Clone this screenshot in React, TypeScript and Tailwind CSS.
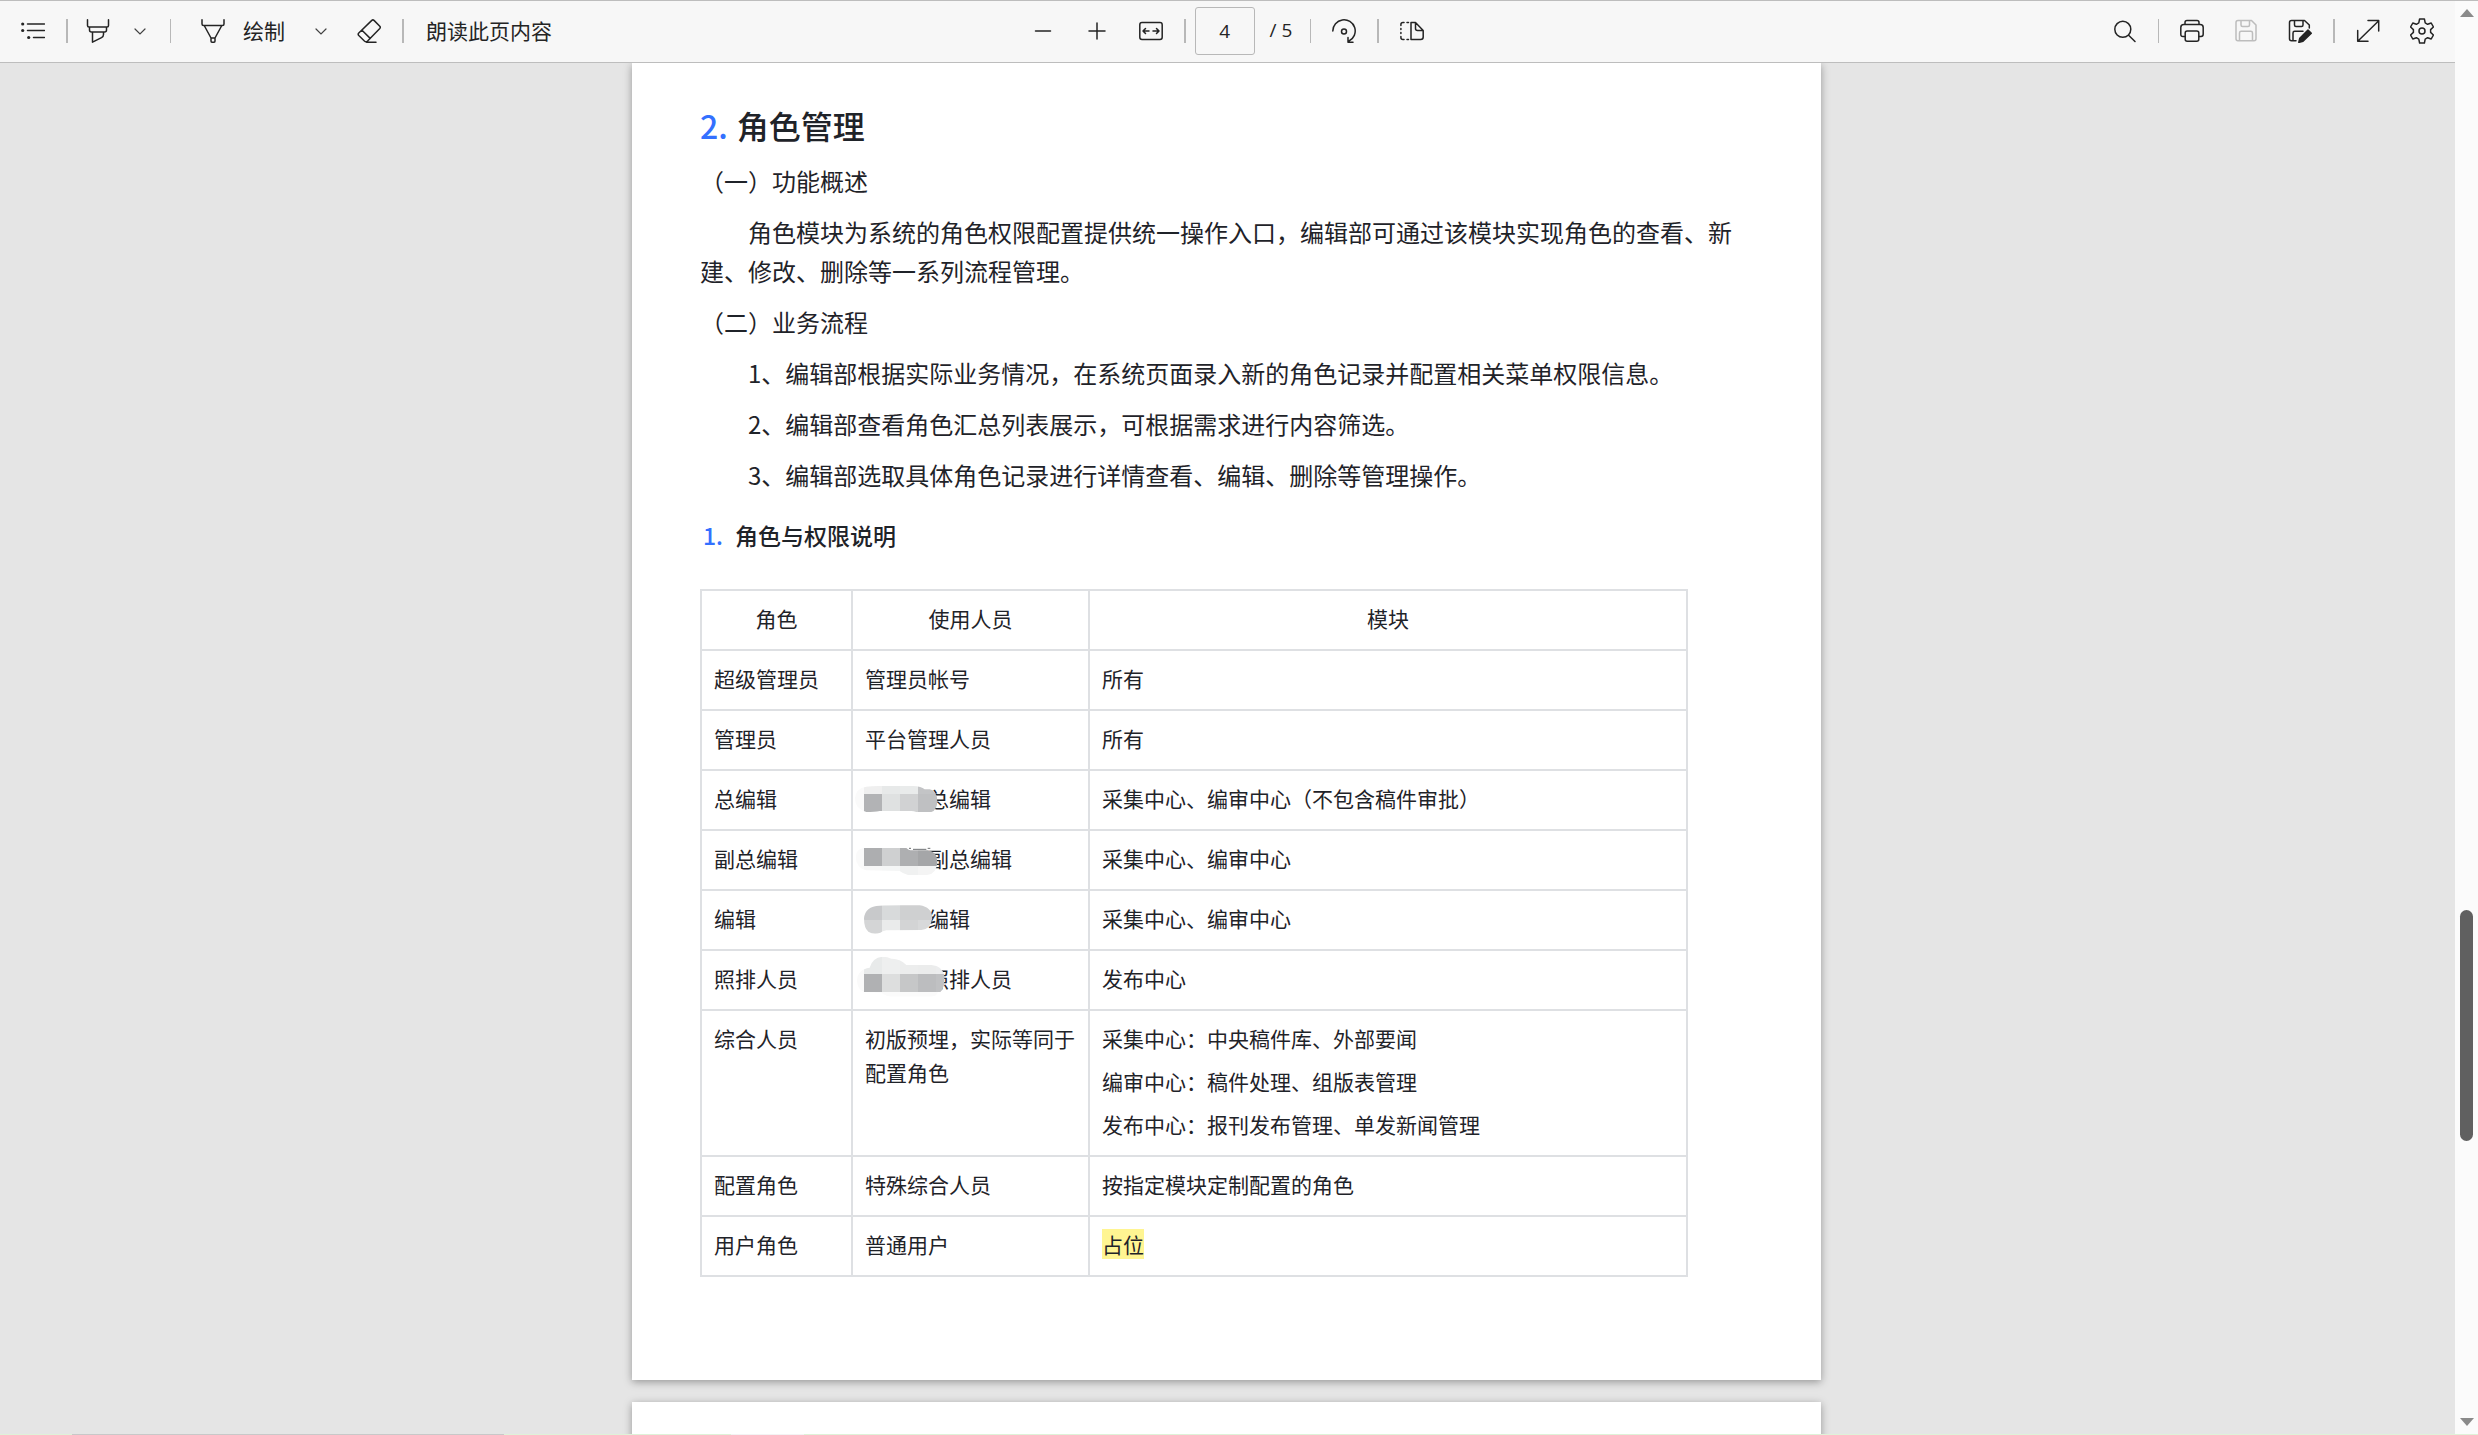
import { useState } from "react";
import type { ReactNode } from "react";

interface Block {
  x: number;
  y: number;
  w: number;
  h: number;
  fill: string;
}

interface MaskShape {
  id: string;
  outline: string;
  blocks: Block[];
  strokes?: string;
}

interface Row {
  role: string;
  user: string;
  modules: string[];
  mask?: MaskShape;
  highlight?: boolean;
}

const row = (y: number, h: number, fills: string[]): Block[] =>
  fills.map((fill, i) => ({ x: i === 0 ? 0 : 33 + (i - 1) * 54, y, w: i === 0 ? 33 : 54, h, fill }));

const masks: Record<string, MaskShape> = {
  chief: {
    id: "mask-chief",
    outline:
      "M40 47Q60 44 90 45L180 45Q205 46 215 55L230 55A24 34 0 0 1 253 90Q252 118 235 123L190 123Q182 120 175 120L80 120Q65 123 40 123Q6 115 6 82Q8 52 40 47Z",
    blocks: [
      ...row(40, 29, ["#fafafa", "#efefef", "#e7e9e9", "#e9ebeb", "#c3c4c6", "#b8b9bc"]),
      ...row(69, 54, ["#fafafa", "#b2b3b5", "#dfe1e1", "#d1d2d3", "#bfc0c2", "#bdbec0"]),
    ],
  },
  deputy: {
    id: "mask-deputy",
    outline:
      "M8 78Q10 52 33 51L160 51Q168 58 172 58L225 58Q252 62 253 92Q252 128 222 132L165 132Q150 128 140 120L40 118Q10 112 8 78Z",
    blocks: [
      ...row(48, 57, ["#fafafa", "#adaeb0", "#cfd0d1", "#aeafb1", "#a5a6a8", "#a9aaac"]),
      ...row(105, 30, ["#fafafa", "#f7f7f7", "#f5f6f6", "#f0f1f1", "#f4f4f4", "#f7f7f7"]),
    ],
    strokes: "M168 52h6M180 55h40M224 52h8",
  },
  editor: {
    id: "mask-editor",
    outline:
      "M33 82Q36 46 80 44Q110 42 200 43Q236 48 238 80Q234 114 205 117L100 118Q88 121 82 125Q62 132 46 122Q33 112 33 82Z",
    blocks: [
      ...row(40, 47, ["#fafafa", "#c8c9cb", "#d8dadb", "#cfd0d1", "#cfd0d1", "#dcdddd"]),
      ...row(87, 45, ["#fafafa", "#d4d5d6", "#eaebeb", "#d3d4d5", "#d8d9da", "#dcdddd"]),
    ],
  },
  layout: {
    id: "mask-layout",
    outline:
      "M12 88Q14 55 50 50Q58 20 88 17Q105 17 115 23Q140 22 160 42L235 42Q270 44 275 78Q275 112 262 123L255 123Q250 137 235 137L120 137Q100 137 85 125L33 123Q12 115 12 88Z",
    blocks: [
      ...row(15, 54, ["#fafafa", "#e8eaea", "#eeefef", "#eceded", "#ebecec", "#ecedee"]),
      ...row(69, 54, ["#fafafa", "#b0b1b3", "#dddede", "#c6c7c8", "#bcbdbf", "#c0c1c3"]),
      ...row(123, 15, ["#fafafa", "#fcfcfc", "#fbfbfb", "#fbfbfb", "#fbfbfb", "#fbfbfb"]),
    ],
  },
};

const rows: Row[] = [
  { role: "超级管理员", user: "管理员帐号", modules: ["所有"] },
  { role: "管理员", user: "平台管理人员", modules: ["所有"] },
  { role: "总编辑", user: "总编辑", modules: ["采集中心、编审中心（不包含稿件审批）"], mask: masks.chief },
  { role: "副总编辑", user: "副总编辑", modules: ["采集中心、编审中心"], mask: masks.deputy },
  { role: "编辑", user: "编辑", modules: ["采集中心、编审中心"], mask: masks.editor },
  { role: "照排人员", user: "照排人员", modules: ["发布中心"], mask: masks.layout },
  {
    role: "综合人员",
    user: "初版预埋，实际等同于配置角色",
    modules: [
      "采集中心：中央稿件库、外部要闻",
      "编审中心：稿件处理、组版表管理",
      "发布中心：报刊发布管理、单发新闻管理",
    ],
  },
  { role: "配置角色", user: "特殊综合人员", modules: ["按指定模块定制配置的角色"] },
  { role: "用户角色", user: "普通用户", modules: ["占位"], highlight: true },
];

const steps = [
  "1、编辑部根据实际业务情况，在系统页面录入新的角色记录并配置相关菜单权限信息。",
  "2、编辑部查看角色汇总列表展示，可根据需求进行内容筛选。",
  "3、编辑部选取具体角色记录进行详情查看、编辑、删除等管理操作。",
];

function Tool({ label, children, className = "", disabled = false }: { label: string; children: ReactNode; className?: string; disabled?: boolean }) {
  return (
    <button type="button" aria-label={label} disabled={disabled} className={`shrink-0 ${disabled ? "text-[#bdbdbd]" : "text-[#242424]"} ${className}`}>
      <svg width="24" height="24" viewBox="0 0 24 24" fill="none" stroke="currentColor" strokeWidth="1.5" strokeLinecap="round" strokeLinejoin="round">
        {children}
      </svg>
    </button>
  );
}

function Chevron({ label, className }: { label: string; className: string }) {
  return (
    <button type="button" aria-label={label} className={`shrink-0 text-[#424242] ${className}`}>
      <svg width="12" height="8" viewBox="0 0 12 8" fill="none" stroke="currentColor" strokeWidth="1.2" strokeLinecap="round">
        <path d="M1 2l5 5 5-5" />
      </svg>
    </button>
  );
}

function Divider({ className }: { className: string }) {
  return <span className={`h-6 shrink-0 bg-[#b8b8b8] ${className}`} />;
}

function Mask({ shape }: { shape: MaskShape }) {
  return (
    <svg className="absolute top-0 left-0" width="94" height="58" viewBox="0 0 282 174" aria-hidden="true">
      <clipPath id={shape.id}>
        <path d={shape.outline} />
      </clipPath>
      <g clipPath={`url(#${shape.id})`} shapeRendering="crispEdges">
        {shape.blocks.map((b, i) => (
          <rect key={i} x={b.x} y={b.y} width={b.w} height={b.h} fill={b.fill} />
        ))}
      </g>
      {shape.strokes && <path d={shape.strokes} stroke="#6d6f73" strokeWidth="3" />}
    </svg>
  );
}

function Toolbar() {
  const [page, setPage] = useState("4");

  return (
    <header className="grid h-[62px] shrink-0 grid-cols-[1fr_auto_1fr] items-center border-b border-[#bdbdbd] bg-[#f7f7f7] pb-[2px] text-[21px] text-[#242424]">
      <div className="flex items-center pl-[21px]">
        <Tool label="目录">
          <path d="M6.5 5H23.5M6.5 11.5H23.5M12.5 18.5H23.5" />
          <g fill="currentColor" stroke="none">
            <circle cx="1.7" cy="5" r="1.6" />
            <circle cx="1.7" cy="11.5" r="1.6" />
            <circle cx="7.7" cy="18.5" r="1.6" />
          </g>
        </Tool>
        <Divider className="ml-[21px] mr-[18px] w-[2px]" />
        <Tool label="突出显示">
          <path d="M1.5 .8V6.500Q1.500 8 3 8H21Q22.500 8 22.500 6.500V.8M3.500 8V11Q3.500 13 5.500 13H18.500Q20.500 13 20.500 11V8M6.500 13V23.200L15.500 18.700Q17.500 17.500 17.500 15.500V13" />
        </Tool>
        <Chevron label="突出显示选项" className="ml-6" />
        <Divider className="ml-6 mr-[30px] w-px" />
        <Tool label="画笔">
          <path d="M1 .8V5Q1 6.500 2.500 6.500H21.500Q23 6.500 23 5V.8M3.200 6.500L10 19V22Q10 23.200 11 23.200H13Q14 23.200 14 22V19L20.800 6.500M10 19H14" />
        </Tool>
        <button type="button" className="ml-[18px]">绘制</button>
        <Chevron label="绘制选项" className="ml-[30px]" />
        <Tool label="橡皮擦" className="ml-[30px]">
          <path d="M14.800 1.400Q15.900 .4 17 1.400L22.800 7.200Q23.800 8.300 22.800 9.400L10.600 22Q9 23.500 7.400 22L1.800 16.500Q.6 15.200 1.800 14ZM5 11.200L13.200 19.400M9.500 23.200H19" />
        </Tool>
        <Divider className="mx-[21px] w-[2px]" />
        <button type="button" className="ml-px">朗读此页内容</button>
      </div>

      <div className="flex items-center">
        <Tool label="缩小">
          <path d="M4.500 12H19.500" />
        </Tool>
        <Tool label="放大" className="ml-[30px]">
          <path d="M4 12H20M12 4V20" />
        </Tool>
        <Tool label="适合页面宽度" className="ml-[30px]">
          <rect x=".8" y="3.500" width="22.400" height="17" rx="2.200" />
          <path d="M10 12H4.200M6.500 9.500L4 12L6.500 14.500M14 12H19.800M17.500 9.500L20 12L17.500 14.500" />
        </Tool>
        <Divider className="ml-[21px] mr-[9px] w-[2px]" />
        <input
          aria-label="页码"
          value={page}
          onChange={(e) => setPage(e.target.value)}
          className="h-12 w-[60px] rounded-[3px] border border-[#b8b8b8] bg-transparent text-center font-['Open_Sans','Noto_Sans',sans-serif] text-[19px]"
        />
        <span className="ml-[15px] font-['Open_Sans','Noto_Sans',sans-serif] text-[19px]">/ 5</span>
        <Divider className="ml-[18px] mr-[21px] w-px" />
        <Tool label="旋转">
          <path d="M.8 12A11.200 11.200 0 1 1 17 22M21 23.200H16V18.500" />
          <circle cx="12" cy="12.500" r="2.500" />
        </Tool>
        <Divider className="mx-[21px] w-[2px]" />
        <Tool label="页面视图">
          <path d="M11 3.500V20.500H20.700Q23.200 20.500 23.200 18V11.500L15.500 3.500ZM15.500 3.500V9.500Q15.500 11.500 17.500 11.500H23.200" />
          <path d="M8.500 3.500H7M4 3.500H3Q.9 3.500 .9 5.500V6.500M.9 9.500V10.500M.9 13.500V14.500M.9 17.500V18.500Q.9 20.500 3 20.500H4M7 20.500H8.500" />
        </Tool>
      </div>

      <div className="flex items-center justify-end pr-[21px]">
        <Tool label="查找">
          <circle cx="9.800" cy="10.300" r="8" />
          <path d="M15.600 16.200L22 22.500" />
        </Tool>
        <Divider className="mx-[21px] w-px" />
        <Tool label="打印">
          <path d="M5 5.500V3.500Q5 1.500 7 1.500H17Q19 1.500 19 3.500V5.500M5 17.500H3Q.8 17.500 .8 15.300V8.500Q.8 5.500 3.800 5.500H20.200Q23.200 5.500 23.200 8.500V15.300Q23.200 17.500 21 17.500H19" />
          <rect x="5.200" y="12" width="13.600" height="10.200" rx="2" />
        </Tool>
        <Tool label="保存" disabled className="ml-[30px]">
          <path d="M4 1.500H17.500L22 6V19.700Q22 21.700 20 21.700H4Q2 21.700 2 19.700V3.500Q2 1.500 4 1.500ZM7 1.500V6Q7 7.500 8.500 7.500H14Q15.500 7.500 15.500 6V1.500M5.500 21.700V14Q5.500 12.300 7.200 12.300H16.800Q18.500 12.300 18.500 14V21.700" />
        </Tool>
        <Tool label="另存为" className="ml-[30px]">
          <path d="M8 21.700H3.500Q1.500 21.700 1.500 19.700V3.500Q1.500 1.500 3.500 1.500H16.500L21.300 6V9M6.500 1.500V6Q6.500 7.500 8 7.500H13.500Q15 7.500 15 6V1.500M5 21.700V14Q5 12.300 6.700 12.300H15" />
          <path d="M20 11L23.300 14.200L15 22.300L10.800 23.400L11.800 19.200Z" fill="currentColor" />
        </Tool>
        <Divider className="mx-[21px] w-[2px]" />
        <Tool label="全屏">
          <path d="M2 22L22.500 2M12 1.600H22.700V12M1.700 11.500V22.200H12" />
        </Tool>
        <button type="button" aria-label="设置" className="ml-[30px] shrink-0">
          <svg width="24" height="26" viewBox="0 0 24 26" fill="none" stroke="currentColor" strokeWidth="1.500" strokeLinejoin="round">
            <path d="M9.600 1H14.400L15.200 4.900L17.600 6.300L21.200 5L23.400 9L20.600 11.600V14.400L23.400 17L21.200 21L17.600 19.700L15.200 21.100L14.400 25H9.600L8.800 21.100L6.400 19.700L2.800 21L.6 17L3.400 14.400V11.600L.6 9L2.800 5L6.400 6.300L8.800 4.900Z" />
            <circle cx="12" cy="13" r="3" />
          </svg>
        </button>
      </div>
    </header>
  );
}

function RoleTable() {
  return (
    <table className="mt-9 w-full max-w-[988px] table-fixed border-collapse text-[21px] leading-[34px]">
      <colgroup>
        <col className="w-[151px]" />
        <col className="w-[237px]" />
        <col />
      </colgroup>
      <thead>
        <tr>
          {["角色", "使用人员", "模块"].map((name) => (
            <th key={name} scope="col" className="border-2 border-[#dee0e3] px-3 pt-[10px] pb-[14px] text-center font-normal">
              {name}
            </th>
          ))}
        </tr>
      </thead>
      <tbody>
        {rows.map((item) => (
          <tr key={item.role} className="align-top">
            <td className="border-2 border-[#dee0e3] px-3 pt-[10px] pb-[14px]">{item.role}</td>
            <td className={`relative border-2 border-[#dee0e3] pt-[10px] pr-3 pb-[14px] ${item.mask ? "pl-[75px]" : "pl-3"}`}>
              {item.user}
              {item.mask && <Mask shape={item.mask} />}
            </td>
            <td className="border-2 border-[#dee0e3] px-3 pt-[10px] pb-[14px]">
              <div className="flex flex-col gap-[9px]">
                {item.modules.map((m) => (
                  <p key={m}>{item.highlight ? <mark className="bg-[#fff592] text-inherit">{m}</mark> : m}</p>
                ))}
              </div>
            </td>
          </tr>
        ))}
      </tbody>
    </table>
  );
}

function Scrollbar() {
  return (
    <div className="flex w-[23px] shrink-0 flex-col items-center bg-[#fbfbfb] py-2 text-[#8a8a8a]">
      <svg width="14" height="8" viewBox="0 0 14 8" className="shrink-0" fill="currentColor">
        <path d="M7 0L14 8H0Z" />
      </svg>
      <div className="grow-[894]" />
      <div className="h-[231px] w-[13px] shrink-0 rounded-full bg-[#606060]" />
      <div className="grow-[277]" />
      <svg width="14" height="8" viewBox="0 0 14 8" className="shrink-0" fill="currentColor">
        <path d="M7 8L14 0H0Z" />
      </svg>
    </div>
  );
}

export default function App() {
  return (
    <div lang="zh-CN" className="flex h-screen flex-col overflow-hidden bg-[#e5e5e5] font-['Noto_Sans_CJK_SC',sans-serif]">
      <div className="flex min-h-0 grow border-t border-[#bdbdbd]">
        <div className="flex min-w-0 grow flex-col">
          <Toolbar />
          <main className="flex min-h-0 grow flex-col items-center gap-[22px] overflow-hidden pr-[2px] text-[#1f2329]">
            <article className="w-full max-w-[1189px] shrink-0 bg-white px-[68px] pt-[38px] pb-[103px] text-[24px] leading-[39px] shadow-[0_2px_8px_rgba(0,0,0,0.35)]">
              <h2 className="text-[32px] leading-[48px] font-medium">
                <span className="mr-[9px] text-[#3370ff]">2.</span>
                角色管理
              </h2>
              <div className="mt-3 flex flex-col gap-3">
                <p>（一）功能概述</p>
                <p className="indent-12">
                  角色模块为系统的角色权限配置提供统一操作入口，编辑部可通过该模块实现角色的查看、新建、修改、删除等一系列流程管理。
                </p>
                <p>（二）业务流程</p>
                {steps.map((s) => (
                  <p key={s} className="indent-12">{s}</p>
                ))}
              </div>
              <h3 className="mt-[23px] pl-[3px] text-[23px] leading-[36px] font-medium">
                <span className="mr-3 text-[#3370ff]">1.</span>
                角色与权限说明
              </h3>
              <RoleTable />
            </article>
            <article className="h-[1680px] w-full max-w-[1189px] shrink-0 bg-white shadow-[0_2px_8px_rgba(0,0,0,0.35)]" />
          </main>
        </div>
        <Scrollbar />
      </div>
      <div className="flex h-px shrink-0 bg-[#dff2d8]">
        <div className="ml-[72px] w-[432px] bg-[#c8c8c8]" />
        <div className="ml-[227px] w-[73px] bg-[#f3f3f3]" />
      </div>
    </div>
  );
}
